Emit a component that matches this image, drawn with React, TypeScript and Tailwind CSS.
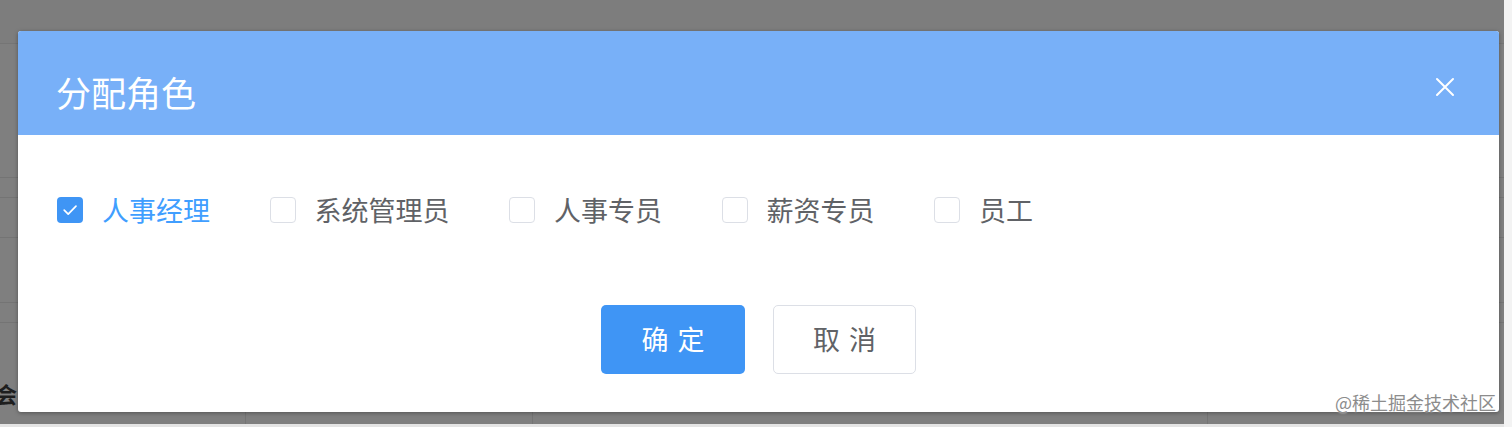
import React from "react";

const roles = [
  { name: "人事经理", checked: true },
  { name: "系统管理员", checked: false },
  { name: "人事专员", checked: false },
  { name: "薪资专员", checked: false },
  { name: "员工", checked: false },
];

function Box({ checked }: { checked: boolean }) {
  if (checked) {
    return (
      <span className="flex h-[26px] w-[26px] shrink-0 items-center justify-center rounded-[4px] bg-[#3f95f5]">
        <svg width="26" height="26" viewBox="0 0 26 26" fill="none">
          <path d="M7.2 13.2 L11.2 17.2 L19 9.2" stroke="#ffffff" strokeWidth="1.7" strokeLinecap="round" strokeLinejoin="round" />
        </svg>
      </span>
    );
  }
  return <span className="h-[26px] w-[26px] shrink-0 rounded-[4px] border border-[#dcdfe6] bg-white" />;
}

export default function App() {
  return (
    <div className="relative flex h-[427px] w-[1512px] overflow-hidden font-['Noto_Sans_CJK_SC','Microsoft_YaHei',sans-serif]">
      {/* underlying page under the mask */}
      <div className="flex w-[1504px] flex-col">
        <div className="flex h-[424px] flex-col bg-[#7f7f7f]">
          <div className="h-[44px] shrink-0 border-b border-[#757575] bg-[#7d7d7d]" />
          <div className="h-[134px] shrink-0 border-b border-[#747474]" />
          <div className="h-[20px] shrink-0 border-b border-[#747474]" />
          <div className="h-[40px] shrink-0 border-b border-[#747474]" />
          <div className="h-[65px] shrink-0 border-b border-[#747474]" />
          <div className="h-[20px] shrink-0 border-b border-[#747474]" />
          <div className="flex flex-1">
            <div className="w-[246px] border-r border-[#747474] pt-[58px]">
              <span className="ml-[-27px] text-[22px] font-bold leading-[24px] text-[#1e1e1e]">社会</span>
            </div>
            <div className="w-[287px] border-r border-[#747474]" />
            <div className="w-[675px] border-r border-[#747474]" />
            <div className="flex-1" />
          </div>
        </div>
        <div className="h-[3px] bg-[#e4e4e4]" />
      </div>
      <div className="w-[8px] bg-[#f3f3f3]" />

      {/* dialog */}
      <div className="absolute left-[18px] top-[31px] flex h-[381px] w-[1481px] flex-col overflow-hidden rounded-[3px] bg-white shadow-[0_1px_4px_rgba(0,0,0,0.35)]">
        <div className="flex h-[104px] shrink-0 items-start justify-between bg-[#78b0f8] pl-[38px] pr-[44px]">
          <div className="pt-[43px] text-[35px] leading-[35px] text-white">分配角色</div>
          <svg className="mt-[46px]" width="20" height="20" viewBox="0 0 20 20" fill="none">
            <path d="M2 2 L18 18 M18 2 L2 18" stroke="#ffffff" strokeWidth="2" strokeLinecap="round" />
          </svg>
        </div>
        <div className="flex flex-1 flex-col pl-[39px] pt-[58px]">
          <div className="flex h-[34px] items-center">
            {roles.map((r) => (
              <div key={r.name} className="mr-[59.5px] flex items-center gap-[19px]">
                <Box checked={r.checked} />
                <span className={`text-[27px] leading-[34px] ${r.checked ? "text-[#409eff]" : "text-[#606266]"}`}>{r.name}</span>
              </div>
            ))}
          </div>
        </div>
        <div className="flex shrink-0 justify-center gap-[28px] pb-[38px]">
          <button className="flex h-[69px] w-[144px] items-center justify-center rounded-[5px] bg-[#3f95f5] pl-[9px] text-[27px] tracking-[9px] text-white">
            确定
          </button>
          <button className="flex h-[69px] w-[143px] items-center justify-center rounded-[5px] border border-[#dcdfe6] bg-white pl-[9px] text-[27px] tracking-[9px] text-[#606266]">
            取消
          </button>
        </div>
      </div>

      {/* watermark */}
      <div className="absolute bottom-[15px] right-[16px] text-[18px] leading-[20px] text-[#8c8c8c] [text-shadow:0_0_2px_#ffffff]">
        @稀土掘金技术社区
      </div>
    </div>
  );
}
